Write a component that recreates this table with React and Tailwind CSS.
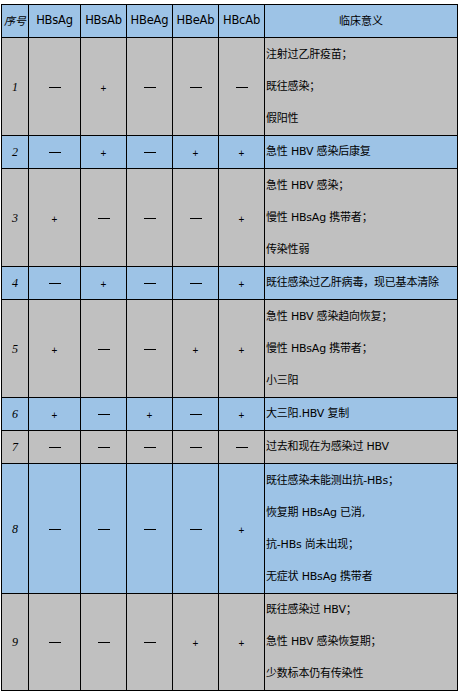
import React from 'react';

const BLUE = 'bg-[#9dc3e6]';
const GRAY = 'bg-[#c0c0c0]';

const rows = [
    { n: '1', v: ['—', '+', '—', '—', '—'], t: ['注射过乙肝疫苗；', '既往感染；', '假阳性'], blue: false, h: 'h-[98px]' },
    { n: '2', v: ['—', '+', '—', '+', '+'], t: ['急性 HBV 感染后康复'], blue: true, h: 'h-[33px]' },
    { n: '3', v: ['+', '—', '—', '—', '+'], t: ['急性 HBV 感染；', '慢性 HBsAg 携带者；', '传染性弱'], blue: false, h: 'h-[98px]' },
    { n: '4', v: ['—', '+', '—', '—', '+'], t: ['既往感染过乙肝病毒，现已基本清除'], blue: true, h: 'h-[33px]' },
    { n: '5', v: ['+', '—', '—', '+', '+'], t: ['急性 HBV 感染趋向恢复；', '慢性 HBsAg 携带者；', '小三阳'], blue: false, h: 'h-[98px]' },
    { n: '6', v: ['+', '—', '+', '—', '+'], t: ['大三阳.HBV 复制'], blue: true, h: 'h-[33px]' },
    { n: '7', v: ['—', '—', '—', '—', '—'], t: ['过去和现在为感染过 HBV'], blue: false, h: 'h-[33px]' },
    { n: '8', v: ['—', '—', '—', '—', '+'], t: ['既往感染未能测出抗-HBs；', '恢复期 HBsAg 已消,', '抗-HBs 尚未出现；', '无症状 HBsAg 携带者'], blue: true, h: 'h-[130px]' },
    { n: '9', v: ['—', '—', '—', '+', '+'], t: ['既往感染过 HBV；', '急性 HBV 感染恢复期；', '少数标本仍有传染性'], blue: false, h: 'h-[97px]' },
];

const heads = ['HBsAg', 'HBsAb', 'HBeAg', 'HBeAb', 'HBcAb'];

const Mark = ({ value }) =>
    value === '+'
        ? <span className="text-[10px] leading-none">+</span>
        : <span className="inline-block w-[12px] h-px bg-black align-middle" />;

export default function App() {
    return (
        <div className="min-h-screen bg-white pt-[4px] pl-px font-['Liberation_Sans','Noto_Sans_CJK_SC',sans-serif] text-black">
            <table className="table-fixed border-collapse w-[456px]">
                <colgroup>
                    <col className="w-[27px]" />
                    <col className="w-[52px]" />
                    <col className="w-[46px]" />
                    <col className="w-[46px]" />
                    <col className="w-[46px]" />
                    <col className="w-[46px]" />
                    <col className="w-[193px]" />
                </colgroup>
                <thead>
                    <tr className={`${BLUE} h-[33px]`}>
                        <th className="border border-black p-0 text-[11px] font-normal italic">序号</th>
                        {heads.map(h => (
                            <th key={h} className="border border-black p-0 text-[11.5px] font-normal font-['DejaVu_Sans',sans-serif] tracking-[-0.2px]">{h}</th>
                        ))}
                        <th className="border border-black p-0 text-[11px] font-normal">临床意义</th>
                    </tr>
                </thead>
                <tbody>
                    {rows.map(r => (
                        <tr key={r.n} className={`${r.blue ? BLUE : GRAY} ${r.h}`}>
                            <td className="border border-black p-0 text-center text-[12px] italic font-['Liberation_Serif',serif]">{r.n}</td>
                            {r.v.map((v, i) => (
                                <td key={i} className="border border-black p-0 text-center">
                                    <Mark value={v} />
                                </td>
                            ))}
                            <td className="border border-black p-0 pl-px text-[11px] leading-[32px] font-['DejaVu_Sans','Noto_Sans_CJK_SC',sans-serif] tracking-[-0.2px]">
                                {r.t.map((line, i) => (
                                    <div key={i} className="whitespace-nowrap">{line}</div>
                                ))}
                            </td>
                        </tr>
                    ))}
                </tbody>
            </table>
        </div>
    );
}
